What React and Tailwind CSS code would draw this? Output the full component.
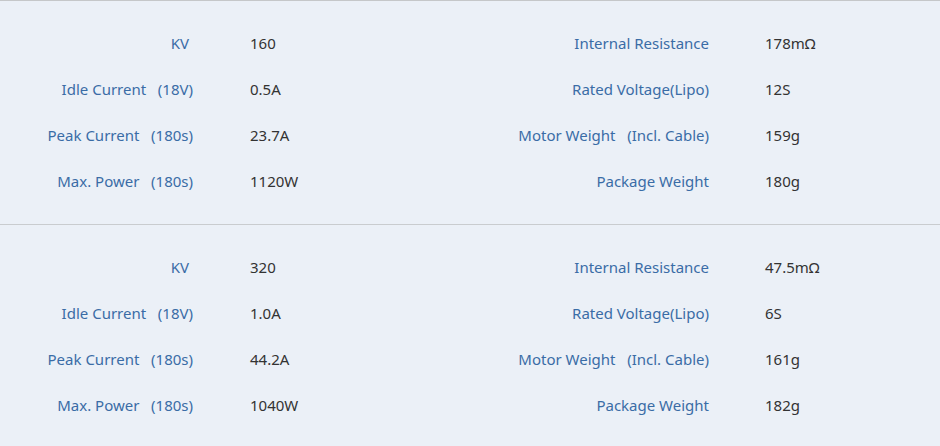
const sections = [
  {
    left: [
      ['KV', '160'],
      ['Idle Current   (18V)', '0.5A'],
      ['Peak Current   (180s)', '23.7A'],
      ['Max. Power   (180s)', '1120W'],
    ],
    right: [
      ['Internal Resistance', '178mΩ'],
      ['Rated Voltage(Lipo)', '12S'],
      ['Motor Weight   (Incl. Cable)', '159g'],
      ['Package Weight', '180g'],
    ],
  },
  {
    left: [
      ['KV', '320'],
      ['Idle Current   (18V)', '1.0A'],
      ['Peak Current   (180s)', '44.2A'],
      ['Max. Power   (180s)', '1040W'],
    ],
    right: [
      ['Internal Resistance', '47.5mΩ'],
      ['Rated Voltage(Lipo)', '6S'],
      ['Motor Weight   (Incl. Cable)', '161g'],
      ['Package Weight', '182g'],
    ],
  },
];

function SpecSection({ data, last }) {
  return (
    <div className={`pt-[19px] pb-[20px] ${last ? '' : 'border-b border-[#c9cccf]'}`}>
      {data.left.map((row, i) => (
        <div key={i} className="grid grid-cols-[193px_259px_257px_1fr] h-[46px] items-center">
          <div className={`text-right text-[#3a6ca6] whitespace-pre ${i === 0 ? 'pr-[4px]' : ''}`}>{row[0]}</div>
          <div className="pl-[57px] text-[#333]">{row[1]}</div>
          <div className="text-right text-[#3a6ca6] whitespace-pre">{data.right[i][0]}</div>
          <div className="pl-[56px] text-[#333]">{data.right[i][1]}</div>
        </div>
      ))}
    </div>
  );
}

export default function App() {
  return (
    <div className="w-[940px] h-[446px] bg-[#ebf0f7] border-t border-[#c5c7c9] text-[15px] font-['Noto_Sans',sans-serif] overflow-hidden">
      {sections.map((s, i) => (
        <SpecSection key={i} data={s} last={i === sections.length - 1} />
      ))}
    </div>
  );
}
